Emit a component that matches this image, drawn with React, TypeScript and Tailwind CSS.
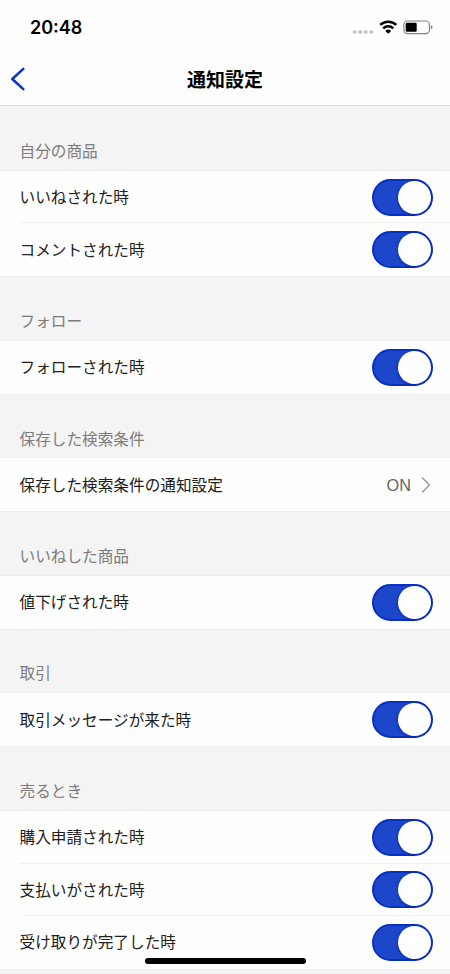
const FONT = 'font-[Inter,"Noto_Sans_CJK_JP",sans-serif]';

type Row = { label: string; value?: string };
type Section = { title: string; rows: Row[] };

const sections: Section[] = [
  { title: "自分の商品", rows: [{ label: "いいねされた時" }, { label: "コメントされた時" }] },
  { title: "フォロー", rows: [{ label: "フォローされた時" }] },
  { title: "保存した検索条件", rows: [{ label: "保存した検索条件の通知設定", value: "ON" }] },
  { title: "いいねした商品", rows: [{ label: "値下げされた時" }] },
  { title: "取引", rows: [{ label: "取引メッセージが来た時" }] },
  {
    title: "売るとき",
    rows: [{ label: "購入申請された時" }, { label: "支払いがされた時" }, { label: "受け取りが完了した時" }],
  },
];

function Toggle() {
  return (
    <button
      role="switch"
      aria-checked="true"
      className="mr-[17px] flex h-[37px] w-[61px] shrink-0 items-center justify-end rounded-full border-2 border-[#0730c4] bg-[#1c47cb]"
    >
      <span className="size-[33px] rounded-full bg-white shadow-[-1px_1px_3px_rgba(0,10,90,0.3)]" />
    </button>
  );
}

function StatusBar() {
  return (
    <div className="flex h-[54px] items-center justify-between pr-[17px] pl-[30px]">
      <span className="pt-[2px] text-[18px] leading-none font-semibold text-black">20:48</span>
      <div className="flex items-center">
        <svg width="22" height="16" viewBox="0 0 22 16" fill="#c5c5c5">
          <circle cx="2.7" cy="13" r="2" />
          <circle cx="8.3" cy="13" r="2" />
          <circle cx="13.8" cy="13" r="2" />
          <circle cx="19.4" cy="13" r="2" />
        </svg>
        <svg className="ml-[5px]" width="19" height="16" viewBox="0 0 19 16" fill="none" stroke="#000" strokeWidth="2.5">
          <path d="M1.2 5.9a11.8 11.8 0 0 1 16.1 0" />
          <path d="M4.2 9.3a7.4 7.4 0 0 1 10.1 0" />
          <path d="M9.25 14.8 6.3 11.9a4.3 4.3 0 0 1 5.9 0Z" fill="#000" stroke="none" />
        </svg>
        <svg className="ml-[5px]" width="30" height="16" viewBox="0 0 30 16">
          <rect x="0.9" y="2" width="25.5" height="12.6" rx="3.6" fill="none" stroke="#828282" strokeWidth="1.1" />
          <rect x="2.7" y="3.8" width="11" height="9" rx="1.2" />
          <path d="M27.8 6.2q1.7.7 1.7 2.1t-1.7 2.1Z" fill="#828282" />
        </svg>
      </div>
    </div>
  );
}

export default function App() {
  return (
    <div className={`${FONT} relative h-[974px] w-[450px] overflow-hidden bg-[#f4f4f4]`} lang="ja">
      <header className="h-[106px] border-b border-[#d9d9d9] bg-[#fefefe]">
        <StatusBar />
        <div className="grid h-[50px] grid-cols-[1fr_auto_1fr] items-center">
          <button aria-label="戻る" className="pl-[10px]">
            <svg width="16" height="24" viewBox="0 0 16 24" fill="none" stroke="#0b33c6" strokeWidth="2.6" strokeLinecap="round" strokeLinejoin="round">
              <path d="M13.3 1.9 2.3 12l11 10.1" />
            </svg>
          </button>
          <h1 className="pt-[3px] text-[19px] leading-none font-bold text-black">通知設定</h1>
        </div>
      </header>
      <main className="text-[15.65px] leading-none">
        {sections.map((section) => (
          <section key={section.title}>
            <h2 className="flex h-[64.85px] items-end pb-[11.3px] pl-[19.5px] text-[#7c7c7c]">{section.title}</h2>
            <ul className="bg-[#fefefe] shadow-[0_-1px_0_#eeeeee,0_1px_0_#eeeeee]">
              {section.rows.map((row, i) => (
                <li key={row.label} className="h-[52.65px] pl-[19.5px]">
                  <div className={`flex h-full items-center justify-between ${i > 0 ? "shadow-[0_-1px_0_#f1f1f1]" : ""}`}>
                    <span className="pt-[1.5px] text-[#202020]">{row.label}</span>
                    {row.value ? (
                      <span className="flex items-center pr-[19px] text-[#666]">
                        <span className="font-['Liberation_Sans'] text-[16.3px]">{row.value}</span>
                        <svg className="ml-[10px]" width="10" height="18" viewBox="0 0 10 18" fill="none" stroke="#929292" strokeWidth="1.3">
                          <path d="m1 1.5 7.5 7.5L1 16.5" />
                        </svg>
                      </span>
                    ) : (
                      <Toggle />
                    )}
                  </div>
                </li>
              ))}
            </ul>
          </section>
        ))}
      </main>
      <div className="absolute bottom-[10px] left-[145px] h-[6px] w-[161px] rounded-full bg-black" />
    </div>
  );
}
